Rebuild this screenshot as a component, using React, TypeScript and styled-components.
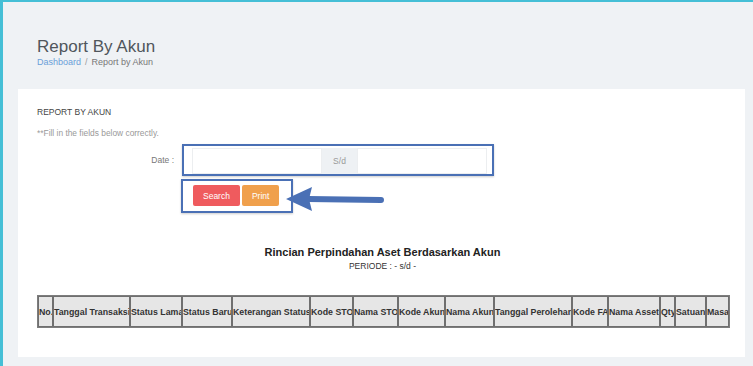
import React from 'react';
import styled, { createGlobalStyle } from 'styled-components';

const GlobalStyle = createGlobalStyle`
  html, body {
    margin: 0;
    padding: 0;
    background: #eff2f5;
    font-family: "Liberation Sans", Arial, sans-serif;
  }
`;

const columns: { label: string; width: number }[] = [
  { label: 'No.', width: 15 },
  { label: 'Tanggal Transaksi', width: 77 },
  { label: 'Status Lama', width: 52 },
  { label: 'Status Baru', width: 50 },
  { label: 'Keterangan Status', width: 78 },
  { label: 'Kode STO', width: 43 },
  { label: 'Nama STO', width: 45 },
  { label: 'Kode Akun', width: 47 },
  { label: 'Nama Akun', width: 49 },
  { label: 'Tanggal Perolehan', width: 78 },
  { label: 'Kode FA', width: 36 },
  { label: 'Nama Asset', width: 52 },
  { label: 'Qty', width: 15 },
  { label: 'Satuan', width: 31 },
  { label: 'Masa', width: 23 },
];

const ArrowIcon = () => (
  <svg width="102" height="28" viewBox="0 0 102 28">
    <line x1="24" y1="14" x2="97" y2="15" stroke="#4a70b5" strokeWidth="6" strokeLinecap="round" />
    <polygon points="2,14 28,2 25,14 28,26" fill="#4a70b5" />
  </svg>
);

const App = () => {
  return (
    <Frame>
      <GlobalStyle />
      <PageHeader>
        <PageTitle>Report By Akun</PageTitle>
        <Breadcrumb>
          <Crumb>Dashboard</Crumb>
          <Separator>/</Separator>
          <span>Report by Akun</span>
        </Breadcrumb>
      </PageHeader>

      <Card>
        <CardTitle>REPORT BY AKUN</CardTitle>
        <Hint>**Fill in the fields below correctly.</Hint>

        <FormGrid>
          <Label>Date :</Label>
          <DateHighlight>
            <InputGroup>
              <DateInput />
              <Addon>S/d</Addon>
              <DateInput />
            </InputGroup>
          </DateHighlight>

          <span />
          <ActionRow>
            <ButtonHighlight>
              <ActionButton $color="#ef5b5e">Search</ActionButton>
              <ActionButton $color="#f0a04c">Print</ActionButton>
            </ButtonHighlight>
            <ArrowWrap>
              <ArrowIcon />
            </ArrowWrap>
          </ActionRow>
        </FormGrid>

        <ReportTitle>Rincian Perpindahan Aset Berdasarkan Akun</ReportTitle>
        <Period>PERIODE : - s/d -</Period>

        <Table>
          <colgroup>
            {columns.map((c) => (
              <col key={c.label} style={{ width: c.width }} />
            ))}
          </colgroup>
          <thead>
            <tr>
              {columns.map((c) => (
                <Th key={c.label}>{c.label}</Th>
              ))}
            </tr>
          </thead>
        </Table>
      </Card>
    </Frame>
  );
};

const Frame = styled.div`
  box-sizing: border-box;
  height: 366px;
  border-left: 3px solid #45bfd6;
  border-top: 2px solid #45bfd6;
  background: #eff2f5;
  padding-top: 35px;
  overflow: hidden;
`;

const PageHeader = styled.div`
  padding-left: 34px;
`;

const PageTitle = styled.h1`
  margin: 0;
  font-size: 17px;
  line-height: 20px;
  font-weight: 400;
  color: #50565c;
`;

const Breadcrumb = styled.div`
  font-size: 9px;
  line-height: 11px;
  color: #777;
`;

const Crumb = styled.span`
  color: #6a9fd9;
`;

const Separator = styled.span`
  margin: 0 4px;
  color: #999;
`;

const Card = styled.div`
  margin: 21px 8px 0 15px;
  height: 268px;
  box-sizing: border-box;
  background: #fff;
  padding: 18px 17px 0 19px;
`;

const CardTitle = styled.div`
  font-size: 8.5px;
  line-height: 10px;
  color: #444;
`;

const Hint = styled.div`
  margin-top: 11px;
  font-size: 8.4px;
  line-height: 10px;
  color: #999;
`;

const FormGrid = styled.div`
  margin-top: 6px;
  display: grid;
  grid-template-columns: 137px auto;
  column-gap: 8px;
  row-gap: 3px;
  align-items: center;
`;

const Label = styled.div`
  text-align: right;
  font-size: 8.5px;
  color: #777;
`;

const DateHighlight = styled.div`
  width: 312px;
  box-sizing: border-box;
  border: 2px solid #4a70b5;
  padding: 2px 5px 0 8px;
  box-shadow: 0 1px 2px rgba(0, 0, 0, 0.2);
`;

const InputGroup = styled.div`
  display: flex;
  height: 26px;
`;

const DateInput = styled.div`
  flex: 1;
  border: 1px solid #eceef0;
  background: #fff;
`;

const Addon = styled.div`
  width: 35px;
  display: flex;
  align-items: center;
  justify-content: center;
  background: #eef1f4;
  color: #999;
  font-size: 8.5px;
`;

const ActionRow = styled.div`
  position: relative;
  display: flex;
  margin-left: -1px;
`;

const ButtonHighlight = styled.div`
  display: flex;
  gap: 2px;
  width: 112px;
  height: 34px;
  box-sizing: border-box;
  border: 2px solid #4a70b5;
  padding: 4px 11px 5px 10px;
  box-shadow: 0 1px 2px rgba(0, 0, 0, 0.2);
`;

const ActionButton = styled.button<{ $color: string }>`
  height: 21px;
  padding: 0 10px;
  border: none;
  border-radius: 2px;
  background: ${(p) => p.$color};
  color: #fff;
  font-family: "Liberation Sans", Arial, sans-serif;
  font-size: 8.5px;
`;

const ArrowWrap = styled.div`
  position: absolute;
  left: 103px;
  top: 6px;
  line-height: 0;
`;

const ReportTitle = styled.div`
  margin-top: 32px;
  text-align: center;
  width: 691px;
  font-size: 11px;
  line-height: 14px;
  font-weight: 700;
  color: #222;
`;

const Period = styled.div`
  margin-top: 2px;
  width: 691px;
  text-align: center;
  font-size: 8.5px;
  line-height: 11px;
  color: #333;
`;

const Table = styled.table`
  margin-top: 23px;
  width: 691px;
  table-layout: fixed;
  border-collapse: separate;
  border-spacing: 0;
  border: 1px solid #7d7d7d;
`;

const Th = styled.th`
  height: 31px;
  box-sizing: border-box;
  padding: 0;
  border: 1px solid #6f6f6f;
  background: #e6e6e6;
  text-align: left;
  font-size: 8.8px;
  font-weight: 700;
  color: #333;
  white-space: nowrap;
  overflow: hidden;
`;

export default App;
